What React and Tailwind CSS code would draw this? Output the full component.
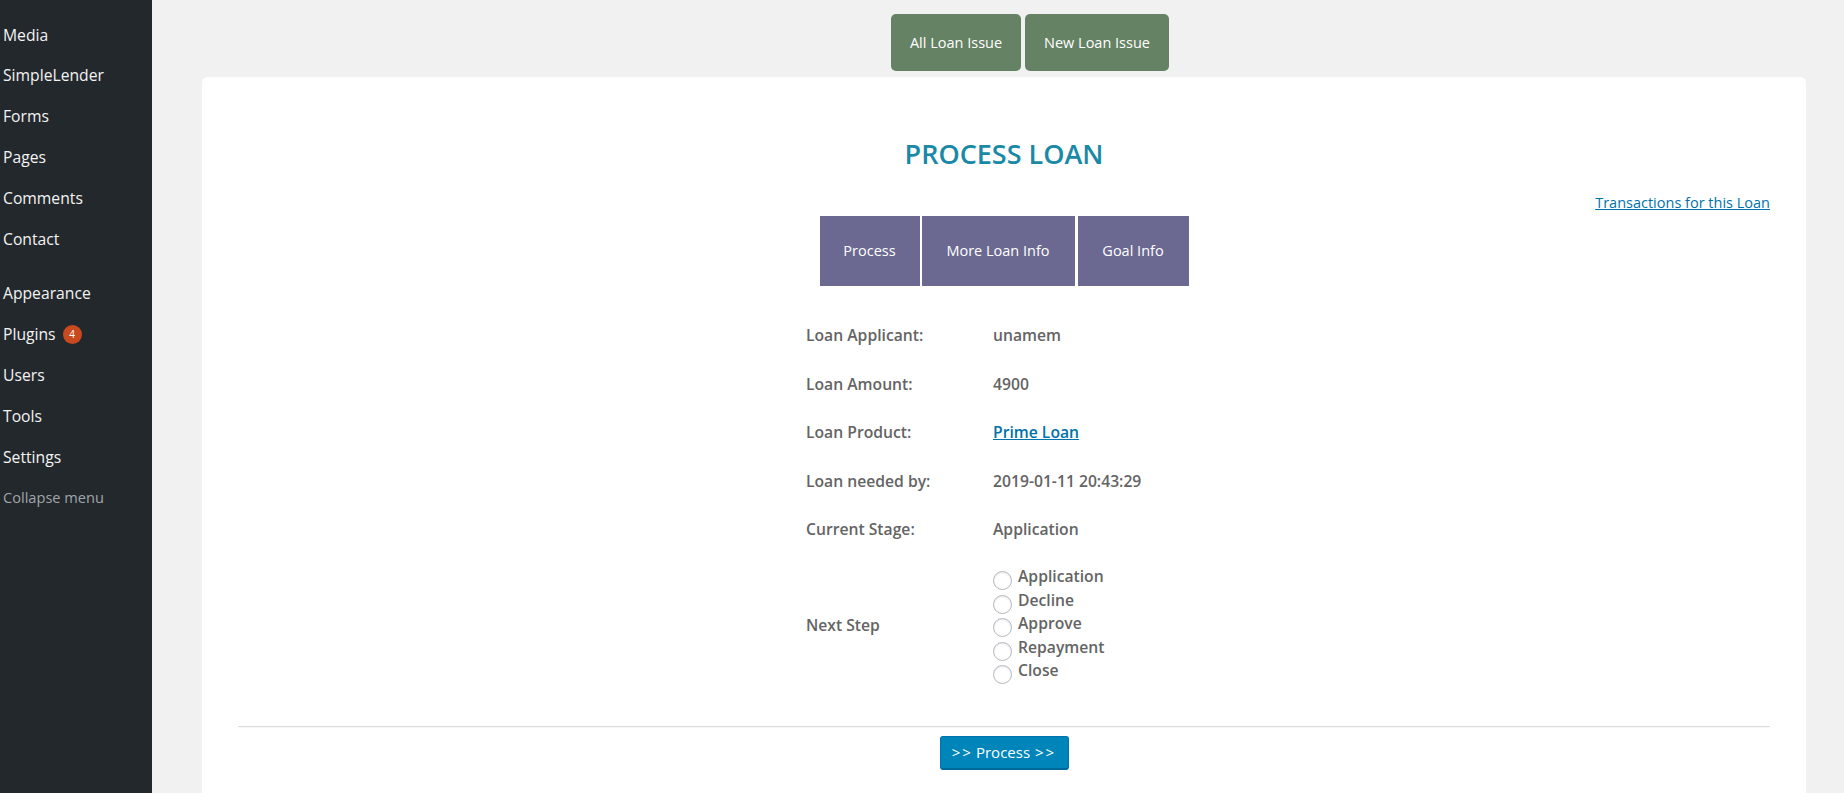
export default function App() {
  const menu1 = ['Media', 'SimpleLender', 'Forms', 'Pages', 'Comments', 'Contact'];
  const menu2 = ['Appearance', 'Plugins', 'Users', 'Tools', 'Settings'];
  const rows = [
    ['Loan Applicant:', 'unamem'],
    ['Loan Amount:', '4900'],
    ['Loan Product:', 'Prime Loan'],
    ['Loan needed by:', '2019-01-11 20:43:29'],
    ['Current Stage:', 'Application'],
  ];
  const steps = ['Application', 'Decline', 'Approve', 'Repayment', 'Close'];
  return (
    <div className="flex h-[793px] overflow-hidden bg-[#f1f1f1] font-['Open_Sans',sans-serif]">
      <div className="w-[152px] shrink-0 bg-[#23282d] pt-[15px] pl-[3px] text-[15.7px] text-[#f3f3f3]">
        {menu1.map((m) => (
          <div key={m} className="h-[40.8px] flex items-center">{m}</div>
        ))}
        <div className="h-[14px]" />
        {menu2.map((m) => (
          <div key={m} className="h-[40.8px] flex items-center">
            {m}
            {m === 'Plugins' && (
              <span className="ml-[7px] w-[19px] h-[19px] rounded-full bg-[#ca4a1f] text-white text-[10px] flex items-center justify-center">4</span>
            )}
          </div>
        ))}
        <div className="h-[40.8px] flex items-center text-[14.6px] text-[#a0a5aa]">Collapse menu</div>
      </div>
      <div className="flex-1 flex flex-col">
        <div className="pt-[14px] pl-[739px] flex gap-[4px]">
          <div className="w-[130px] h-[57px] rounded-[5px] bg-[#658264] text-white text-[14.5px] flex items-center justify-center">All Loan Issue</div>
          <div className="w-[144px] h-[57px] rounded-[5px] bg-[#658264] text-white text-[14.5px] flex items-center justify-center">New Loan Issue</div>
        </div>
        <div className="mt-[6px] ml-[50px] mr-[38px] flex-1 bg-white rounded-t-[6px] px-[36px] pt-[59px]">
          <div className="h-[36px] leading-[36px] text-center text-[27px] font-semibold text-[#1a89a7]">PROCESS LOAN</div>
          <div className="mt-[21px] h-[20px] flex justify-end">
            <a className="text-[14.5px] leading-[20px] text-[#0073aa] underline">Transactions for this Loan</a>
          </div>
          <div className="mt-[3px] flex justify-center text-white text-[14.5px]">
            <div className="w-[100px] h-[70px] bg-[#6b6991] flex items-center justify-center">Process</div>
            <div className="ml-[2px] w-[153px] h-[70px] bg-[#6b6991] flex items-center justify-center">More Loan Info</div>
            <div className="ml-[3px] w-[111px] h-[70px] bg-[#6b6991] flex items-center justify-center">Goal Info</div>
          </div>
          <div className="mt-[26px] ml-[568px] text-[15.7px] font-semibold text-[#646464]">
            {rows.map(([l, v]) => (
              <div key={l} className="h-[48.5px] flex items-center">
                <div className="w-[187px]">{l}</div>
                {v === 'Prime Loan' ? (
                  <a className="text-[#0073aa] underline">{v}</a>
                ) : (
                  <div>{v}</div>
                )}
              </div>
            ))}
            <div className="mt-[11px] flex items-center">
              <div className="w-[187px] pt-[4px]">Next Step</div>
              <div>
                {steps.map((s) => (
                  <div key={s} className="h-[23.5px] flex items-center">
                    <span className="mt-[7px] w-[19px] h-[19px] rounded-full border border-[#b4b9be] bg-white shadow-[inset_0_1px_2px_rgba(0,0,0,0.1)]" />
                    <span className="ml-[6px]">{s}</span>
                  </div>
                ))}
              </div>
            </div>
          </div>
          <div className="mt-[43px] border-t border-t-[#dcdcdc] border-b border-b-[#f8f8f8]" />
          <div className="mt-[8px] flex justify-center">
            <div className="w-[129px] h-[34px] rounded-[3px] bg-[#0085ba] border border-[#0073aa] border-b-[#006799] border-b-2 text-white text-[15px] flex items-center justify-center">
              <span className="tracking-[2px]">&gt;&gt;</span>
              <span className="ml-[3px] mr-[5px]">Process</span>
              <span className="tracking-[2px]">&gt;&gt;</span>
            </div>
          </div>
        </div>
      </div>
    </div>
  );
}
